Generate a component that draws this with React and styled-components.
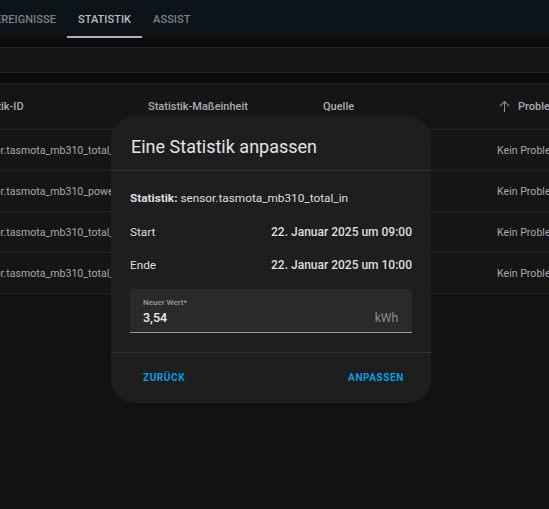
import React from 'react';
import styled, { createGlobalStyle } from 'styled-components';

const GlobalStyle = createGlobalStyle`
	html, body {
		margin: 0;
		padding: 0;
		background: #111111;
		font-family: Roboto, "Noto Sans", sans-serif;
		-webkit-font-smoothing: antialiased;
	}
`;

const Page = styled.div`
	position: relative;
	width: 549px;
	height: 509px;
	overflow: hidden;
	background: #121212;
`;

const TabBar = styled.div`
	height: 38px;
	background: #0c1319;
	display: flex;
	align-items: stretch;
	overflow: hidden;
`;

const TabList = styled.div`
	display: flex;
	margin-left: -16px;
`;

const Tab = styled.div`
	padding: 2px 11px 0;
	display: flex;
	align-items: center;
	font-size: 11px;
	font-weight: 500;
	letter-spacing: 0.05px;
	color: ${(p) => (p.$active ? '#b9bcbf' : '#7c8185')};
	border-bottom: 2px solid ${(p) => (p.$active ? '#aeb2b5' : 'transparent')};
	box-sizing: border-box;
`;

const Strip = styled.div`
	height: ${(p) => p.$h}px;
	background: #0c0c0c;
`;

const SearchRow = styled.div`
	height: 24px;
	background: #161616;
	border-top: 1px solid #242424;
	border-bottom: 1px solid #242424;
`;

const Table = styled.div`
	background: #151515;
	border-top: 1px solid #232323;
`;

const Row = styled.div`
	display: grid;
	grid-template-columns: 179px 175px 174px 1fr;
	align-items: center;
	height: ${(p) => (p.$head ? 45 : 40)}px;
	border-bottom: 1px solid #232323;
	margin-left: -31px;
	font-size: ${(p) => (p.$head ? 11 : 10.6)}px;
	font-weight: ${(p) => (p.$head ? 500 : 400)};
	color: ${(p) => (p.$head ? '#a9acae' : '#a7a9ab')};
	white-space: nowrap;
	overflow: hidden;
`;

const Cell = styled.div`
	display: flex;
	align-items: center;
	gap: 6px;
	overflow: hidden;
	padding-left: ${(p) => p.$indent || 0}px;
	svg {
		flex-shrink: 0;
	}
`;

const Dialog = styled.div`
	position: absolute;
	left: 111px;
	top: 116px;
	width: 320px;
	height: 287px;
	background: #1e1e1e;
	border-radius: 24px;
	display: flex;
	flex-direction: column;
	color: #e1e1e1;
`;

const Title = styled.div`
	height: 55px;
	padding: 7px 20px 0;
	display: flex;
	align-items: center;
	font-size: 18px;
	font-weight: 400;
	color: #e3e3e3;
	border-bottom: 1px solid #333333;
	box-sizing: border-box;
`;

const Body = styled.div`
	padding: 10px 19px 19px;
	display: flex;
	flex-direction: column;
	border-bottom: 1px solid #333333;
`;

const InfoLine = styled.div`
	display: flex;
	justify-content: space-between;
	align-items: center;
	height: ${(p) => (p.$first ? 34 : 33)}px;
	font-size: 11.8px;
	color: #dedede;
	b {
		font-weight: 700;
	}
`;

const DateText = styled.span`
	font-weight: 500;
	font-size: 12px;
`;

const Field = styled.div`
	margin-top: 8px;
	height: 44px;
	background: #2a2a2a;
	border-radius: 4px 4px 0 0;
	border-bottom: 1px solid #9a9a9a;
	box-sizing: border-box;
	padding: 8px 14px 0 13px;
	display: flex;
	flex-direction: column;
`;

const FieldLabel = styled.div`
	font-size: 8px;
	font-weight: 500;
	color: #9c9c9c;
	line-height: 12px;
`;

const FieldRow = styled.div`
	display: flex;
	justify-content: space-between;
	align-items: center;
	line-height: 18px;
`;

const FieldValue = styled.span`
	font-size: 12.5px;
	font-weight: 500;
	color: #eeeeee;
`;

const Suffix = styled.span`
	font-size: 12px;
	color: #8e8e8e;
`;

const Footer = styled.div`
	flex: 1;
	display: flex;
	justify-content: space-between;
	align-items: center;
	padding: 0 15px 2px 20px;
`;

const Button = styled.button`
	background: none;
	border: none;
	padding: 8px 12px;
	font-family: Roboto, "Noto Sans", sans-serif;
	font-size: 10px;
	font-weight: 700;
	letter-spacing: 0.6px;
	color: #039be5;
	cursor: pointer;
`;

const ArrowIcon = () => (
	<svg width="15" height="15" viewBox="0 0 24 24" fill="none" stroke="#8d8f91" strokeWidth="1.8">
		<path d="M12 21V4" />
		<path d="M4.5 11.5L12 4l7.5 7.5" />
	</svg>
);

const rows = [
	'sensor.tasmota_mb310_total_in',
	'sensor.tasmota_mb310_power',
	'sensor.tasmota_mb310_total_in',
	'sensor.tasmota_mb310_total_out',
];

const App = () => {
	return (
		<Page>
			<GlobalStyle />
			<TabBar>
				<TabList>
					<Tab>EREIGNISSE</Tab>
					<Tab $active>STATISTIK</Tab>
					<Tab>ASSIST</Tab>
				</TabList>
			</TabBar>
			<Strip $h={9} />
			<SearchRow />
			<Strip $h={10} />
			<Table>
				<Row $head>
					<Cell>Statistik-ID</Cell>
					<Cell>Statistik-Maßeinheit</Cell>
					<Cell>Quelle</Cell>
					<Cell>
						<ArrowIcon />
						Probleme
					</Cell>
				</Row>
				{rows.map((r, i) => (
					<Row key={i}>
						<Cell $indent={3}>{r}</Cell>
						<Cell>kWh</Cell>
						<Cell>recorder</Cell>
						<Cell>Kein Problem</Cell>
					</Row>
				))}
			</Table>
			<Dialog>
				<Title>Eine Statistik anpassen</Title>
				<Body>
					<InfoLine $first>
						<span>
							<b>Statistik:</b> sensor.tasmota_mb310_total_in
						</span>
					</InfoLine>
					<InfoLine>
						<span>Start</span>
						<DateText>22. Januar 2025 um 09:00</DateText>
					</InfoLine>
					<InfoLine>
						<span>Ende</span>
						<DateText>22. Januar 2025 um 10:00</DateText>
					</InfoLine>
					<Field>
						<FieldLabel>Neuer Wert*</FieldLabel>
						<FieldRow>
							<FieldValue>3,54</FieldValue>
							<Suffix>kWh</Suffix>
						</FieldRow>
					</Field>
				</Body>
				<Footer>
					<Button>ZURÜCK</Button>
					<Button>ANPASSEN</Button>
				</Footer>
			</Dialog>
		</Page>
	);
};

export default App;
